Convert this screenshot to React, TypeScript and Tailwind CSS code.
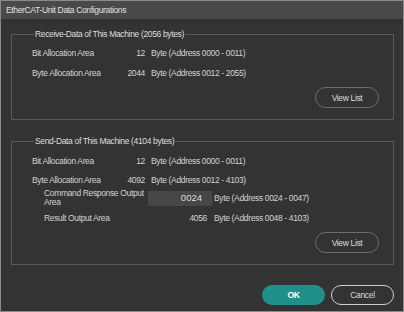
const FONT = "font-['Liberation_Sans',Arial,sans-serif]";

function Row({ label, value, range }: { label: string; value: string; range: string }) {
  return (
    <div className="flex h-[19px] items-center">
      <span className="w-[95px]">{label}</span>
      <span className="w-[18px] text-right">{value}</span>
      <span className="ml-[6px]">{range}</span>
    </div>
  );
}

function ViewList() {
  return (
    <div className="flex justify-end pr-[14px]">
      <button className="h-[21px] w-[64px] rounded-full border border-[#6e6e6e] text-[#dcdcdc]">
        View List
      </button>
    </div>
  );
}

export default function App() {
  return (
    <div
      className={`flex h-[312px] w-[404px] flex-col border border-[#8a8a8a] bg-[#333333] text-[8.5px] leading-[12px] tracking-[-0.35px] text-[#d2d2d2] ${FONT}`}
    >
      <div className="flex h-[18px] items-center bg-[#494949] pl-[5px] text-[#e0e0e0]">
        EtherCAT-Unit Data Configurations
      </div>

      <div className="flex flex-col pl-[10px] pr-[9px] pt-[9px]">
        <fieldset className="border border-[#595959] pb-[11px] pl-[20px]">
          <legend className="ml-[2px] px-[1px] text-[#dedede]">
            Receive-Data of This Machine (2056 bytes)
          </legend>
          <div className="pt-[3px]">
            <div className="flex h-[20px] items-center">
              <span className="w-[95px]">Bit Allocation Area</span>
              <span className="w-[18px] text-right">12</span>
              <span className="ml-[6px]">Byte (Address 0000 - 0011)</span>
            </div>
            <div className="flex h-[20px] items-center">
              <span className="w-[95px]">Byte Allocation Area</span>
              <span className="w-[18px] text-right">2044</span>
              <span className="ml-[6px]">Byte (Address 0012 - 2055)</span>
            </div>
          </div>
          <div className="mt-[4px]">
            <ViewList />
          </div>
        </fieldset>

        <fieldset className="mt-[15px] border border-[#595959] pb-[11px] pl-[20px]">
          <legend className="ml-[2px] px-[1px] text-[#dedede]">
            Send-Data of This Machine (4104 bytes)
          </legend>
          <div className="pt-[4px]">
            <Row label="Bit Allocation Area" value="12" range="Byte (Address 0000 - 0011)" />
            <Row label="Byte Allocation Area" value="4092" range="Byte (Address 0012 - 4103)" />
            <div className="mt-[1px] flex h-[16px] items-center pl-[12px]">
              <span className="w-[104px] whitespace-nowrap leading-[9px]">
                Command Response Output
                <br />
                Area
              </span>
              <div className="flex h-[15px] w-[64px] items-center justify-end bg-[#474747] pr-[10px] text-[9.5px] tracking-normal text-[#dcdcdc]">
                0024
              </div>
              <span className="ml-[2px]">Byte (Address 0024 - 0047)</span>
            </div>
            <div className="mt-[2px] flex h-[19px] items-center pl-[12px]">
              <span className="w-[104px]">Result Output Area</span>
              <span className="w-[64px] pr-[5px] text-right">4056</span>
              <span className="ml-[2px]">Byte (Address 0048 - 4103)</span>
            </div>
          </div>
          <div className="mt-[5px]">
            <ViewList />
          </div>
        </fieldset>

        <div className="mt-[20px] flex justify-end gap-[6px]">
          <button className="h-[20px] w-[63px] rounded-full bg-[#1f9089] font-semibold text-white">
            OK
          </button>
          <button className="h-[20px] w-[63px] rounded-full border-[1.5px] border-[#cfcfcf] text-[#d8d8d8]">
            Cancel
          </button>
        </div>
      </div>
    </div>
  );
}
